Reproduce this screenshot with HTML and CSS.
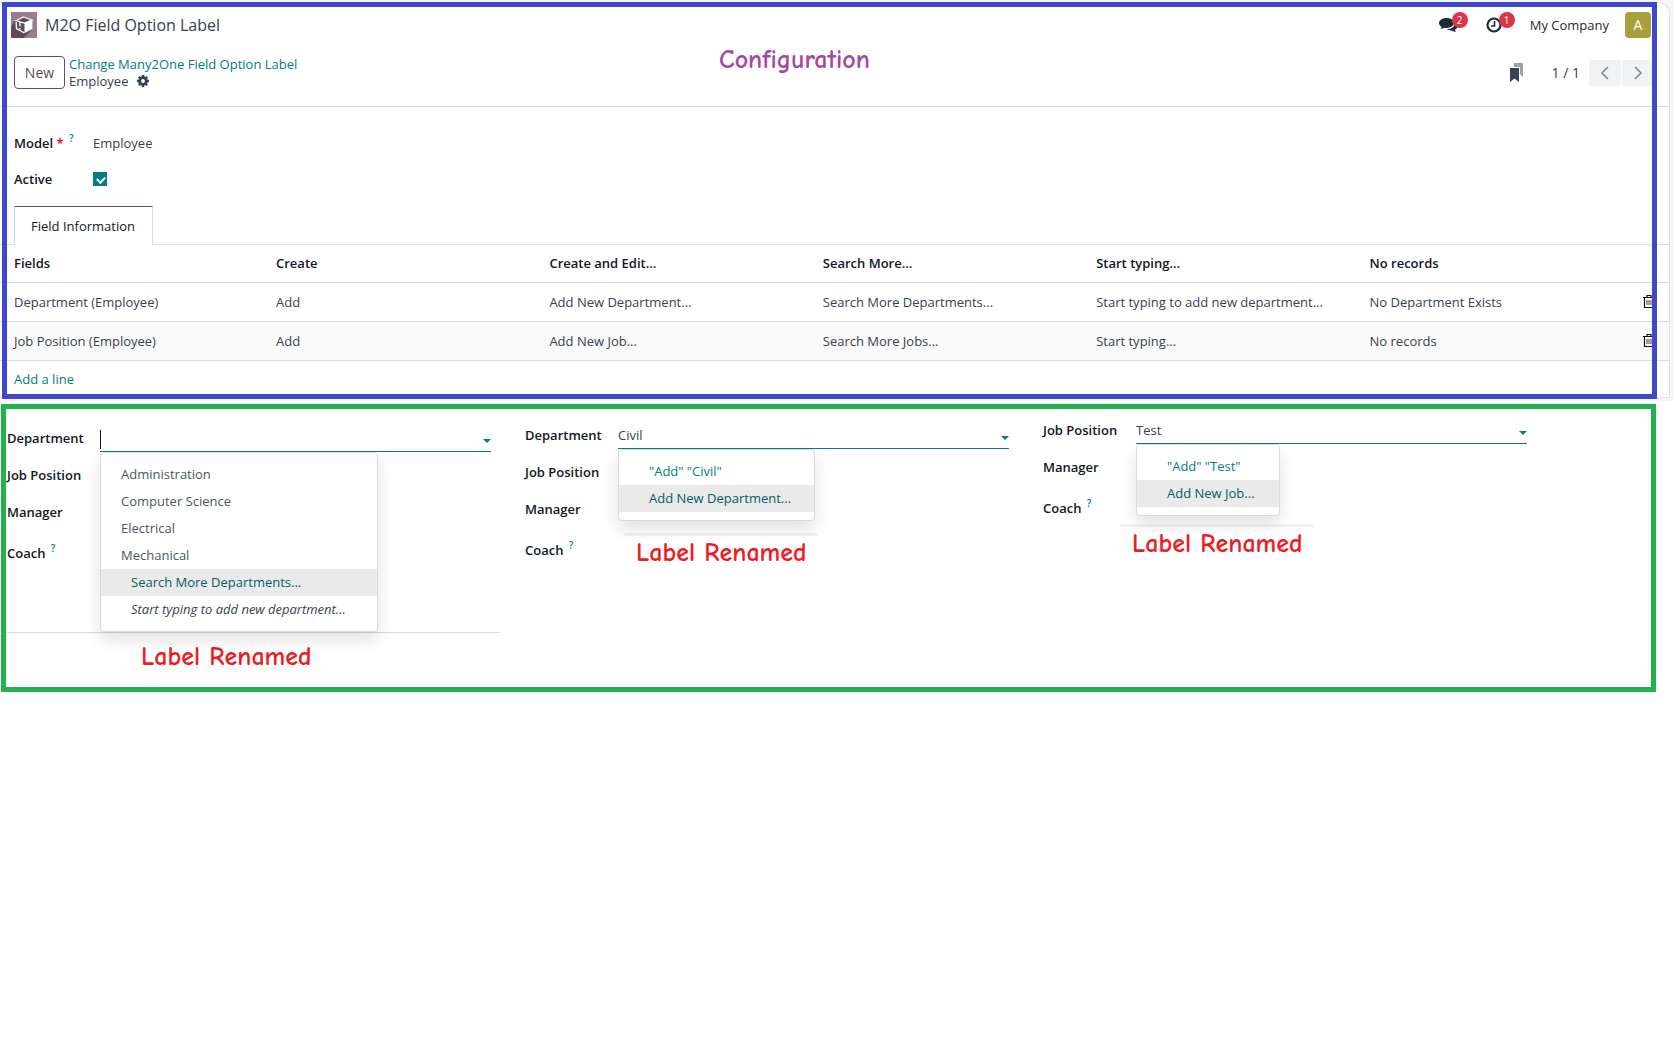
FILE: index.html
```html
<!DOCTYPE html>
<html lang="en">
<head>
<meta charset="utf-8">
<title>M2O Field Option Label</title>
<link rel="stylesheet" href="styles.css">
</head>
<body>
<section class="config">
  <div class="sheet">
    <header class="navbar">
      <svg class="app-icon" viewBox="0 0 26 26" aria-hidden="true">
        <rect width="26" height="26" fill="#9c7a92"/>
        <path d="M0 15 4 8 12 4.500 21.500 8v9L12.500 26H0z" fill="#5f4a5a"/>
        <path d="m13.500 11 8-3v9l-8 4z" fill="#fff"/>
        <path d="m12.500 5 8.500 3-7.500 3L5 8.500zM5 8.500 5.500 16.500l8 4.500M9 10.500v4M9 16v1.500" fill="none" stroke="#fff" stroke-width="1.300"/>
      </svg>
      <span class="app-name">M2O Field Option Label</span>
      <button class="systray" type="button" aria-label="Messages">
        <svg width="19" height="16" viewBox="0 0 19 16"><path d="M7.500 1C3.400 1 0 3.200 0 6c0 1.600 1.100 3 2.800 3.900-.2.800-.7 1.500-1.400 2.100 1.500-.1 2.900-.6 3.900-1.300.7.200 1.400.2 2.200.2 4.100 0 7.500-2.200 7.500-4.900S11.600 1 7.500 1z" fill="#1f2937"/><path d="M16 6.200c0 3.400-3.900 5.900-8.200 5.900 1.300 1 3.200 1.500 5.200 1.300 1.200.8 2.500 1.300 4.100 1.300-.7-.6-1.200-1.200-1.400-2 1.700-.8 2.800-1.900 2.800-3.300 0-1.300-1-2.500-2.500-3.200z" fill="#1f2937"/></svg>
        <span class="badge">2</span>
      </button>
      <button class="systray" type="button" aria-label="Activities">
        <svg width="16" height="16" viewBox="0 0 16 16" fill="none" stroke="#1f2937" stroke-width="2.200"><circle cx="8" cy="8" r="6.500"/><path d="M8.500 4v5H5" stroke-width="1.600"/></svg>
        <span class="badge">1</span>
      </button>
      <a class="company" href="#">My Company</a>
      <button class="avatar" type="button">A</button>
    </header>

    <div class="control-panel">
      <button class="btn-new" type="button">New</button>
      <div class="breadcrumb">
        <a href="#">Change Many2One Field Option Label</a>
        <span class="current">Employee
          <svg width="12" height="12" viewBox="0 0 12 12"><circle cx="6" cy="6" r="3.300" fill="none" stroke="#374151" stroke-width="2.800"/><path d="M6 0v2M6 10v2M0 6h2M10 6h2M1.800 1.800l1.400 1.400M8.800 8.800l1.400 1.400M1.800 10.200l1.400-1.400M8.800 3.200l1.400-1.400" stroke="#374151" stroke-width="2.400"/></svg>
        </span>
      </div>
      <button class="bookmark" type="button" aria-label="Bookmarks">
        <svg width="13" height="19" viewBox="0 0 13 19"><path d="M4 0h9v14l-3-3V4H4z" fill="#9ca3af"/><path d="M0 5h9v14l-4.500-3.500L0 19z" fill="#374151"/></svg>
      </button>
      <span class="pager">1 / 1</span>
      <div class="pager-buttons">
        <button type="button" aria-label="Previous"><svg width="8" height="14" viewBox="0 0 8 14"><path d="M7 1 1 7l6 6"/></svg></button>
        <button type="button" aria-label="Next"><svg width="8" height="14" viewBox="0 0 8 14"><path d="m1 1 6 6-6 6"/></svg></button>
      </div>
    </div>

    <div class="form">
      <div class="form-row">
        <span class="form-label">Model <span class="required">*</span> <sup>?</sup></span>
        <span>Employee</span>
      </div>
      <div class="form-row">
        <label class="form-label" for="active">Active</label>
        <input id="active" class="check" type="checkbox" checked>
      </div>
    </div>

    <div class="tabs"><button class="tab" type="button">Field Information</button></div>

    <table class="lines">
      <thead>
        <tr><th class="first">Fields</th><th>Create</th><th>Create and Edit...</th><th>Search More...</th><th>Start typing...</th><th>No records</th><th class="remove"></th></tr>
      </thead>
      <tbody>
        <tr>
          <td>Department (Employee)</td><td>Add</td><td>Add New Department...</td><td>Search More Departments...</td><td>Start typing to add new department...</td><td>No Department Exists</td>
          <td><button class="trash" type="button" aria-label="Delete"><svg width="12" height="13" viewBox="0 0 12 13"><path d="M0 2.500h12M4 2V.500h4V2M1.500 3v9.500h9V3" fill="none" stroke="#111" stroke-width="1.200"/><path d="M4 5v5M6 5v5M8 5v5" stroke="#6b2a5c"/></svg></button></td>
        </tr>
        <tr>
          <td>Job Position (Employee)</td><td>Add</td><td>Add New Job...</td><td>Search More Jobs...</td><td>Start typing...</td><td>No records</td>
          <td><button class="trash" type="button" aria-label="Delete"><svg width="12" height="13" viewBox="0 0 12 13"><path d="M0 2.500h12M4 2V.500h4V2M1.500 3v9.500h9V3" fill="none" stroke="#111" stroke-width="1.200"/><path d="M4 5v5M6 5v5M8 5v5" stroke="#6b2a5c"/></svg></button></td>
        </tr>
        <tr><td colspan="7"><a href="#">Add a line</a></td></tr>
      </tbody>
    </table>
  </div>
  <div class="frame"></div>
  <div class="note note-config">Configuration</div>
</section>

<section class="examples">
  <div class="example example-search">
    <div class="field">
      <label for="dep1">Department</label>
      <div class="combo">
        <input id="dep1" type="text"><span class="caret"></span><span class="arrow"></span>
        <ul class="menu">
          <li>Administration</li><li>Computer Science</li><li>Electrical</li><li>Mechanical</li>
          <li class="action active">Search More Departments...</li>
          <li class="action hint">Start typing to add new department...</li>
        </ul>
      </div>
    </div>
    <div class="field"><span>Job Position</span></div>
    <div class="field"><span>Manager</span></div>
    <div class="field last"><span>Coach <sup>?</sup></span></div>
    <div class="note note-search">Label Renamed</div>
  </div>

  <div class="example example-create">
    <div class="field">
      <label for="dep2">Department</label>
      <div class="combo">
        <input id="dep2" type="text" value="Civil"><span class="arrow"></span>
        <ul class="menu">
          <li class="action">"Add" "Civil"</li>
          <li class="action active">Add New Department...</li>
        </ul>
      </div>
    </div>
    <div class="field"><span>Job Position</span></div>
    <div class="field"><span>Manager</span></div>
    <div class="field last"><span>Coach <sup>?</sup></span></div>
    <div class="note note-create">Label Renamed</div>
  </div>

  <div class="example example-job">
    <div class="field">
      <label for="job">Job Position</label>
      <div class="combo">
        <input id="job" type="text" value="Test"><span class="arrow"></span>
        <ul class="menu">
          <li class="action">"Add" "Test"</li>
          <li class="action active">Add New Job...</li>
        </ul>
      </div>
    </div>
    <div class="field"><span>Manager</span></div>
    <div class="field last"><span>Coach <sup>?</sup></span></div>
    <div class="note note-job">Label Renamed</div>
  </div>
</section>
</body>
</html>
```
FILE: styles.css
```css
* { box-sizing: border-box; }
body {
  margin: 0;
  background: #fff;
  color: #374151;
  font: 13px/20px "Segoe UI", "Open Sans", "Noto Sans", sans-serif;
}
button { margin: 0; padding: 0; border: 0; background: none; font: inherit; color: inherit; }
a { color: #017e84; text-decoration: none; }
svg { display: block; flex: none; }
sup { color: #0180a5; font-size: 10px; line-height: 10px; font-weight: 600; vertical-align: 6px; margin-left: 2px; }

/* configuration view */
.config { position: relative; margin-right: 6px; padding: 2px 4px 3px 0; background: #f6f6f7; }
.sheet {
  background: #fff;
  border: 1px solid #dfe1e4;
  border-left: 0;
  border-radius: 0 12px 0 0;
}
.frame { position: absolute; inset: 2px 17px 2px 2px; border: 5px solid #3f48cc; pointer-events: none; }

.navbar { display: flex; align-items: center; height: 44px; padding: 0 18px 0 11px; }
.app-icon { width: 26px; height: 26px; }
.app-name { margin: 0 auto 0 8px; font-size: 16px; line-height: 24px; }
.systray { position: relative; margin-right: 28px; }
.badge {
  position: absolute;
  left: 13px;
  top: -5px;
  width: 16px;
  height: 16px;
  border-radius: 50%;
  background: #dc3545;
  color: #fff;
  font-size: 10px;
  line-height: 16px;
  text-align: center;
}
.company { margin-right: 16px; color: #1f2937; }
.avatar { width: 26px; height: 26px; border-radius: 4px; background: #a99f3c; color: #fff; font-size: 14px; }

.control-panel {
  display: flex;
  align-items: center;
  height: 60px;
  padding: 0 15px 8px 14px;
  border-bottom: 1px solid #d8dadd;
}
.btn-new {
  width: 51px;
  height: 33px;
  border: 1px solid #71496a;
  border-radius: 4px;
  color: #5f4560;
  font-size: 14px;
  font-weight: 500;
}
.breadcrumb { display: flex; flex-direction: column; margin: 0 auto 0 4px; line-height: 17px; }
.breadcrumb a { font-weight: 500; }
.current { display: flex; align-items: center; gap: 9px; }
.pager { margin: 0 9px 0 29px; font-size: 14px; }
.pager-buttons { display: flex; gap: 1px; }
.pager-buttons button { display: flex; align-items: center; justify-content: center; width: 32px; height: 26px; background: #f1f2f4; }
.pager-buttons path { fill: none; stroke: #7b8088; stroke-width: 1.5px; }

.form { display: flex; flex-direction: column; gap: 16px; padding: 26px 14px 17px; }
.form-row { display: grid; grid-template-columns: 79px 1fr; align-items: center; height: 20px; }
.form-label, .field label, .field > span { color: #111827; font-weight: 600; }
.required { color: #f00; }
.check { appearance: none; position: relative; width: 14px; height: 14px; margin: 0; background: #017e84; }
.check::after {
  content: "";
  position: absolute;
  left: 4px;
  top: 4px;
  width: 6px;
  height: 4px;
  border: solid #fff;
  border-width: 0 0 2px 2px;
  transform: rotate(-45deg);
}

.tabs { display: flex; padding-left: 14px; border-bottom: 1px solid #d8dadd; }
.tab {
  height: 39px;
  margin-bottom: -1px;
  padding: 0 17px 0 16px;
  border: 1px solid #d8dadd;
  border-top-color: #71496a;
  border-bottom: 0;
  background: #fff;
  color: #111827;
}

.lines { width: 100%; table-layout: fixed; border-collapse: collapse; }
.lines th, .lines td { height: 39px; padding: 0 4px; border-bottom: 1px solid #d8dadd; text-align: left; white-space: nowrap; }
.lines th { height: 37px; color: #111827; font-weight: 600; }
.lines tr > :first-child { padding-left: 14px; }
.lines tbody tr:nth-child(2) { background: #fafafa; }
.lines tbody tr:last-child td { height: 37px; border-bottom: 0; }
.lines .first { width: 272px; }
.lines .remove { width: 30px; }
.trash { display: block; }

/* renamed option examples */
.examples {
  display: grid;
  grid-template-columns: repeat(3, 1fr);
  gap: 34px;
  min-height: 288px;
  margin: 3px 24px 0 1px;
  padding: 0 124px 0 1px;
  border: 5px solid #22b14c;
}
.example { position: relative; padding-top: 11px; }
.example-create { padding-top: 8px; }
.example-job { padding-top: 3px; }
.example-search::before {
  content: "";
  position: absolute;
  left: -1px;
  right: -9px;
  top: 223px;
  border-top: 1px solid #d8dadd;
}
.field { display: grid; grid-template-columns: 93px 1fr; height: 37px; line-height: 37px; }
.field.last { height: 45px; line-height: 45px; }
.combo { position: relative; padding-top: 6px; }
.combo input {
  display: block;
  width: 100%;
  height: 26px;
  padding: 0 20px 0 0;
  border: 0;
  border-bottom: 1px solid #017e84;
  outline: 0;
  background: none;
  color: #374151;
  font: inherit;
}
.caret { position: absolute; left: 0; top: 10px; width: 1px; height: 19px; background: #111827; }
.arrow { position: absolute; right: 0; top: 19px; border: 4px solid transparent; border-top-color: #017e84; border-bottom: 0; }
.menu {
  position: absolute;
  z-index: 1;
  left: 0;
  top: 32px;
  margin: 0;
  padding: 8px 0;
  border: 1px solid #d8dadd;
  border-radius: 4px;
  background: #fff;
  box-shadow: 0 8px 16px rgba(0, 0, 0, .12);
  list-style: none;
  white-space: nowrap;
}
.example-search .menu { min-width: 278px; }
.example-create .menu { min-width: 197px; }
.example-job .menu { min-width: 144px; }
.menu li { padding: 0 20px; line-height: 27px; color: #4b5563; }
.menu .action { padding-left: 30px; color: #017e84; }
.menu .active { background: #eaeaea; color: #015f63; }
.menu .hint { color: #374151; font-style: italic; }

/* handwritten annotations */
.note {
  position: absolute;
  color: #ed1c24;
  font: 700 26px/32px "Comic Sans MS", "Comic Neue", Lato, sans-serif;
  white-space: nowrap;
}
.note-config { left: 719px; top: 44px; color: #a349a4; }
.note-search { left: 134px; top: 232px; }
.note-create { left: 111px; top: 128px; }
.note-job { left: 89px; top: 119px; }
.note-create::before, .note-job::before {
  content: "";
  position: absolute;
  left: -12px;
  top: -4px;
  width: 194px;
  height: 3px;
  background: #f2f2f2;
}
```
